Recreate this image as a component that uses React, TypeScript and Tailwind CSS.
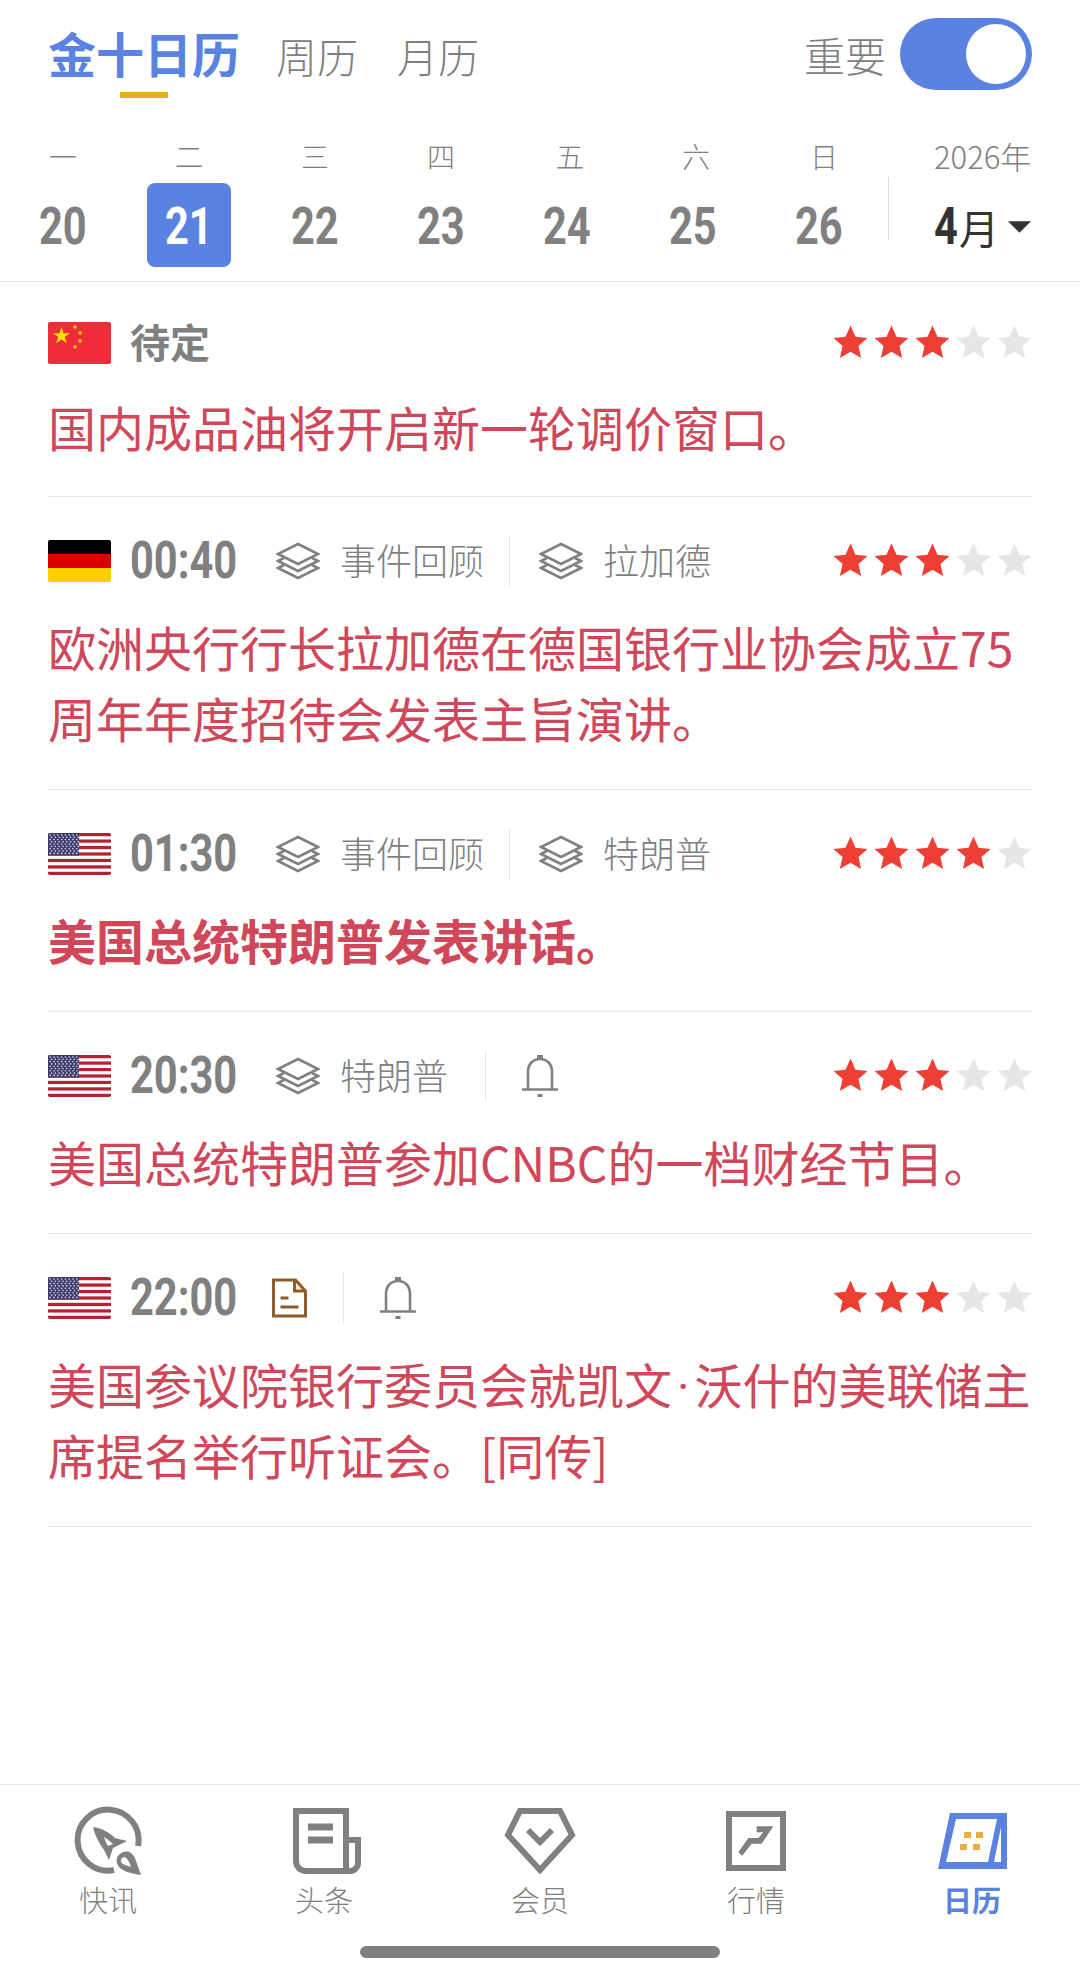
const numFont = "font-['Roboto',sans-serif]";

const days = [
  { label: "一", num: "20", shift: "" },
  { label: "二", num: "21", active: true, shift: "" },
  { label: "三", num: "22", shift: "" },
  { label: "四", num: "23", shift: "" },
  { label: "五", num: "24", shift: "ml-[6px]" },
  { label: "六", num: "25", shift: "ml-[6px]" },
  { label: "日", num: "26", shift: "ml-[10px]" },
];

const Star = ({ on }: { on: boolean }) => (
  <svg width="35" height="34" viewBox="0 0 33 32">
    <path
      d="M16.5 0.5l4.7 10.6 11.3 1.1-8.5 7.5 2.5 11.3-10-5.9-10 5.9 2.5-11.3L0.5 12.2l11.3-1.1z"
      fill={on ? "#ee3f35" : "#e6e6e6"}
    />
  </svg>
);

const Stars = ({ count }: { count: number }) => (
  <div className="ml-auto flex gap-[6px] pb-[2px]">
    {[1, 2, 3, 4, 5].map((i) => (
      <Star key={i} on={i <= count} />
    ))}
  </div>
);

const FlagCN = () => (
  <svg width="63" height="42" viewBox="0 0 63 42" className="shrink-0 rounded-[2px]">
    <rect width="63" height="42" fill="#ee2c3a" />
    <path d="M13.5 5l2 6.2h6.5l-5.3 3.8 2 6.2-5.2-3.8-5.3 3.8 2-6.2L5 11.2h6.5z" fill="#ffe000" />
    <g fill="#ffd400">
      <circle cx="27" cy="5" r="1.7" />
      <circle cx="32" cy="11" r="1.7" />
      <circle cx="32" cy="19" r="1.7" />
      <circle cx="27" cy="25" r="1.7" />
    </g>
  </svg>
);

const FlagDE = () => (
  <svg width="63" height="42" viewBox="0 0 63 42" className="shrink-0 rounded-[2px]">
    <rect width="63" height="14" fill="#000" />
    <rect y="14" width="63" height="14" fill="#dd0000" />
    <rect y="28" width="63" height="14" fill="#ffce00" />
  </svg>
);

const FlagUS = () => (
  <svg width="63" height="42" viewBox="0 0 63 42" className="shrink-0 rounded-[2px]">
    <rect width="63" height="42" fill="#fff" />
    {[0, 2, 4, 6, 8, 10, 12].map((i) => (
      <rect key={i} y={(i * 42) / 13} width="63" height={42 / 13} fill="#b22234" />
    ))}
    <rect width="31" height="22.6" fill="#3c3b6e" />
    {[0, 1, 2, 3, 4, 5, 6, 7, 8].map((r) =>
      [0, 1, 2, 3, 4, 5, 6, 7].map((c) => (
        <circle key={`${r}-${c}`} cx={2.2 + c * 3.8 + (r % 2 ? 1.4 : 0)} cy={2 + r * 2.3} r="0.8" fill="#e4e4f0" />
      ))
    )}
  </svg>
);

const Layers = () => (
  <svg width="44" height="38" viewBox="0 0 44 38" fill="none" stroke="#808080" strokeWidth="2.6" className="shrink-0">
    <path d="M22 2L42 12 22 22 2 12z" />
    <path d="M8 16L2 19 22 29 42 19 36 16" />
    <path d="M8 23L2 26 22 36 42 26 36 23" />
  </svg>
);

const Bell = () => (
  <svg width="38" height="44" viewBox="0 0 38 44" fill="none" stroke="#808080" strokeWidth="2.6" className="shrink-0">
    <path d="M7 35V18C7 10 12 5 19 5s12 5 12 13v17" />
    <path d="M1 35.5h36" />
    <path d="M16 2.5h6" strokeWidth="3" />
    <path d="M16.5 41.5h5" strokeWidth="3" />
  </svg>
);

const DocIcon = () => (
  <svg width="37" height="40" viewBox="0 0 36 40" className="shrink-0">
    <path d="M24 2l10 11H24z" fill="#fdf1cf" />
    <path d="M2 2h22l10 11v25H2z" fill="none" stroke="#8c5b2c" strokeWidth="3" />
    <path d="M23 2v11h11" fill="none" stroke="#8c5b2c" strokeWidth="3" />
    <path d="M9 20h8M9 29h18" stroke="#8c5b2c" strokeWidth="3" />
  </svg>
);

const Chip = ({ text }: { text: string }) => (
  <div className="flex items-center">
    <Layers />
    <span className="ml-[20px] pb-[4px] text-[36px] leading-[44px] font-light text-[#808080]">{text}</span>
  </div>
);

const Divider = () => <div className="h-[50px] w-px bg-[#e5e5e5]" />;

type Item = {
  flag: "cn" | "de" | "us";
  time: string;
  stars: number;
  title: React.ReactNode;
  bold?: boolean;
  meta: React.ReactNode;
};

const items: Item[] = [
  {
    flag: "de",
    time: "00:40",
    stars: 3,
    title: "欧洲央行行长拉加德在德国银行业协会成立75周年年度招待会发表主旨演讲。",
    meta: (
      <>
        <div className="ml-[39px]"><Chip text="事件回顾" /></div>
        <div className="ml-[25px]"><Divider /></div>
        <div className="ml-[29px]"><Chip text="拉加德" /></div>
      </>
    ),
  },
  {
    flag: "us",
    time: "01:30",
    stars: 4,
    title: "美国总统特朗普发表讲话。",
    bold: true,
    meta: (
      <>
        <div className="ml-[39px]"><Chip text="事件回顾" /></div>
        <div className="ml-[25px]"><Divider /></div>
        <div className="ml-[29px]"><Chip text="特朗普" /></div>
      </>
    ),
  },
  {
    flag: "us",
    time: "20:30",
    stars: 3,
    title: "美国总统特朗普参加CNBC的一档财经节目。",
    meta: (
      <>
        <div className="ml-[39px]"><Chip text="特朗普" /></div>
        <div className="ml-[37px]"><Divider /></div>
        <div className="ml-[35px]"><Bell /></div>
      </>
    ),
  },
  {
    flag: "us",
    time: "22:00",
    stars: 3,
    title: (
      <>
        美国参议院银行委员会就凯文<span className="mx-[5px] font-['Roboto'] leading-none">·</span>沃什的美联储主席提名举行听证会。[同传]
      </>
    ),
    meta: (
      <>
        <div className="ml-[34px]"><DocIcon /></div>
        <div className="ml-[35px]"><Divider /></div>
        <div className="ml-[35px]"><Bell /></div>
      </>
    ),
  },
];

const Flag = ({ name }: { name: Item["flag"] }) =>
  name === "cn" ? <FlagCN /> : name === "de" ? <FlagDE /> : <FlagUS />;

const Row = ({ item }: { item: Item }) => (
  <div className="border-b border-[#e6e6e6] pt-[40px] pb-[36px]">
    <div className="flex h-[48px] items-center">
      <Flag name={item.flag} />
      <div className="ml-[19px] w-[107px] shrink-0">
        <span className={`inline-block origin-left scale-x-[0.8] text-[52px] leading-[48px] font-bold whitespace-nowrap text-[#808080] ${numFont}`}>
          {item.time}
        </span>
      </div>
      {item.meta}
      <Stars count={item.stars} />
    </div>
    <p className={`mt-[26px] text-[48px] leading-[71px] text-[#cf4759] ${item.bold ? "font-bold" : ""}`}>{item.title}</p>
  </div>
);

const IconFlash = () => (
  <svg width="70" height="72" viewBox="13 7 70 72" fill="#808080">
    <path d="M78 48A30.5 30.5 0 1 0 54 72" fill="none" stroke="#808080" strokeWidth="6" />
    <path fillRule="evenodd" d="M33 29c8 1 16 5 22 11l12 3-14 7-4 12-5-10c-5-7-9-14-11-23zM44 39c1 3 2 6 4 9l5-2c-3-3-6-5-9-7z" />
    <path fillRule="evenodd" d="M81 77c-6-1-13-2-18-5-6-3-8-9-5-14 3-4 9-6 13-3 3 2 4 5 5 8zM62 60c-2 2-1 5 1 6 2 1 5 2 8 3-1-3-2-6-4-8-1-2-3-2-5-1z" />
  </svg>
);

const IconNews = () => (
  <svg width="68" height="66" viewBox="0 0 68 66" fill="none" stroke="#808080" strokeWidth="6" className="ml-[6px]">
    <path d="M3 3h50v60H13a10 10 0 0 1-10-10z" />
    <path d="M53 32h12v23a8 8 0 0 1-8 8h-4" />
    <path d="M15 19h25M15 32h25" strokeWidth="7" />
  </svg>
);

const IconVip = () => (
  <svg width="72" height="66" viewBox="0 0 72 66" fill="none" stroke="#808080" strokeWidth="6">
    <path d="M16 3h40l12 24-32 35L4 27z" />
    <path d="M24 22l12 12 12-12" />
  </svg>
);

const IconMarket = () => (
  <svg width="60" height="60" viewBox="0 0 60 60">
    <rect x="3" y="3" width="54" height="54" fill="none" stroke="#808080" strokeWidth="6" />
    <path d="M12.3 41.3L22.3 27H32.3L37.3 21.3H30.7V15.3H47.3L35.7 32.7H25.7L16.3 44.7z" fill="#808080" />
  </svg>
);

const IconCalendar = () => (
  <svg width="69" height="56" viewBox="0 0 69 56">
    <path d="M12 0h57v56H0z" fill="#5a82e0" />
    <path d="M18 6h41l-9 43H8z" fill="#fff" />
    <path d="M63 14v35h-7z" fill="#fff" />
    <g fill="#e8ad3f">
      <rect x="26" y="19" width="7" height="6" />
      <rect x="38" y="19" width="7" height="6" />
      <rect x="22" y="31" width="7" height="6" />
      <rect x="35" y="31" width="7" height="6" />
    </g>
  </svg>
);

const tabs = [
  { label: "快讯", icon: <IconFlash /> },
  { label: "头条", icon: <IconNews /> },
  { label: "会员", icon: <IconVip /> },
  { label: "行情", icon: <IconMarket /> },
  { label: "日历", icon: <IconCalendar />, active: true },
];

export default function App() {
  return (
    <div className="flex h-[1978px] w-[1080px] flex-col bg-white font-['Noto_Sans_CJK_SC','Roboto',sans-serif]">
      <header className="border-b border-[#e6e6e6]">
        <div className="mt-[18px] flex h-[72px] items-start px-[48px]">
          <div className="flex flex-col">
            <span className="mt-[2px] text-[48px] leading-[64px] font-bold text-[#5a82e0]">金十日历</span>
            <div className="mt-[8px] ml-[72px] h-[6px] w-[48px] bg-[#e7ac25]" />
          </div>
          <span className="mt-[9px] ml-[36px] text-[41px] leading-[56px] font-light text-[#808080]">周历</span>
          <span className="mt-[9px] ml-[39px] text-[41px] leading-[56px] font-light text-[#808080]">月历</span>
          <div className="ml-auto flex h-[72px] items-center">
            <span className="text-[41px] leading-[56px] font-light text-[#808080]">重要</span>
            <div className="ml-[14px] flex h-[72px] w-[132px] items-center justify-end rounded-full bg-[#5a82e0] pr-[6px]">
              <div className="h-[60px] w-[60px] rounded-full bg-white" />
            </div>
          </div>
        </div>
        <div className="mt-[46px] flex h-[145px]">
          {days.map((d) => (
            <div key={d.num} className="flex w-[126px] flex-col items-center">
              <span className={`h-[40px] text-[28px] leading-[40px] font-light text-[#808080] ${d.shift}`}>{d.label}</span>
              <div
                className={`mt-[7px] flex h-[84px] w-[84px] items-center justify-center rounded-[8px] pt-[4px] ${
                  d.active ? "bg-[#5a82e0] text-white" : "text-[#808080]"
                }`}
              >
                <span className={`inline-block scale-x-[0.8] text-[52px] leading-none font-bold ${numFont}`}>{d.num}</span>
              </div>
            </div>
          ))}
          <div className="mt-[41px] ml-[6px] h-[63px] w-px bg-[#dddddd]" />
          <div className="ml-[45px] flex flex-col">
            <span className="h-[40px] text-[31px] leading-[40px] font-light whitespace-nowrap text-[#808080]">2026年</span>
            <div className="mt-[21px] flex h-[60px] items-center">
              <div className="w-[25px] shrink-0">
                <span className={`inline-block origin-left scale-x-[0.8] text-[52px] leading-none font-bold text-[#333333] ${numFont}`}>4</span>
              </div>
              <span className="text-[40px] leading-none text-[#333333]">月</span>
              <svg width="23" height="12" viewBox="0 0 24 12" className="ml-[9px]">
                <path d="M0 0h24L12 12z" fill="#333333" />
              </svg>
            </div>
          </div>
        </div>
      </header>

      <main className="flex-1 px-[48px]">
        <div className="border-b border-[#e6e6e6] pt-[40px] pb-[34px]">
          <div className="flex h-[42px] items-center">
            <FlagCN />
            <span className="ml-[19px] pb-[4px] text-[40px] leading-[42px] font-bold text-[#808080]">待定</span>
            <Stars count={3} />
          </div>
          <p className="mt-[27px] text-[48px] leading-[71px] text-[#cf4759]">国内成品油将开启新一轮调价窗口。</p>
        </div>
        {items.map((item) => (
          <Row key={item.time} item={item} />
        ))}
      </main>

      <footer className="h-[194px] border-t border-[#e6e6e6]">
        <div className="flex h-[161px]">
          {tabs.map((t) => (
            <div key={t.label} className="flex w-[216px] flex-col items-center">
              <div className="mt-[20px] flex h-[72px] items-center justify-center">{t.icon}</div>
              <span className={`mt-[2px] text-[29px] leading-[40px] ${t.active ? "font-bold text-[#5a82e0]" : "font-light text-[#808080]"}`}>
                {t.label}
              </span>
            </div>
          ))}
        </div>
        <div className="mx-auto h-[12px] w-[360px] rounded-full bg-[#808080]" />
      </footer>
    </div>
  );
}
